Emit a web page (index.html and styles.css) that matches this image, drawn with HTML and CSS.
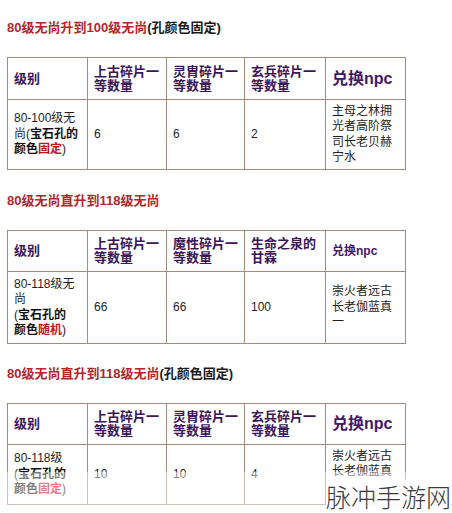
FILE: index.html
```html
<!DOCTYPE html>
<html lang="zh">
<head>
<meta charset="utf-8">
<link rel="stylesheet" href="styles.css">
</head>
<body>
<div class="page">
  <p class="title"><span class="red">80级无尚升到100级无尚</span>(孔颜色固定)</p>
  <table class="grid t1">
    <colgroup><col class="c1"><col class="c2"><col class="c3"><col class="c4"><col class="c5"></colgroup>
    <tr class="head">
      <td>级别</td>
      <td>上古碎片一<br>等数量</td>
      <td>灵胄碎片一<br>等数量</td>
      <td>玄兵碎片一<br>等数量</td>
      <td class="npc big">兑换npc</td>
    </tr>
    <tr class="body">
      <td>80-100级无<br>尚(<b>宝石孔的</b><br><b>颜色<span class="red">固定</span></b>)</td>
      <td>6</td>
      <td>6</td>
      <td>2</td>
      <td>主母之林拥<br>光者高阶祭<br>司长老贝赫<br>宁水</td>
    </tr>
  </table>

  <p class="title"><span class="red">80级无尚直升到118级无尚</span></p>
  <table class="grid t2">
    <colgroup><col class="c1"><col class="c2"><col class="c3"><col class="c4"><col class="c5"></colgroup>
    <tr class="head">
      <td>级别</td>
      <td>上古碎片一<br>等数量</td>
      <td>魔性碎片一<br>等数量</td>
      <td>生命之泉的<br>甘霖</td>
      <td class="npc">兑换npc</td>
    </tr>
    <tr class="body">
      <td>80-118级无<br>尚<br>(<b>宝石孔的</b><br><b>颜色<span class="red">随机</span></b>)</td>
      <td>66</td>
      <td>66</td>
      <td>100</td>
      <td>崇火者远古<br>长老伽蓝真<br>一</td>
    </tr>
  </table>

  <p class="title"><span class="red">80级无尚直升到118级无尚</span>(孔颜色固定)</p>
  <table class="grid t3">
    <colgroup><col class="c1"><col class="c2"><col class="c3"><col class="c4"><col class="c5"></colgroup>
    <tr class="head">
      <td>级别</td>
      <td>上古碎片一<br>等数量</td>
      <td>灵胄碎片一<br>等数量</td>
      <td>玄兵碎片一<br>等数量</td>
      <td class="npc big">兑换npc</td>
    </tr>
    <tr class="body">
      <td>80-118级<br>(<b>宝石孔的</b><br><b>颜色<span class="red">固定</span></b>)</td>
      <td>10</td>
      <td>10</td>
      <td>4</td>
      <td class="top">崇火者远古<br>长老伽蓝真</td>
    </tr>
  </table>
</div>
<div class="fade"></div>
<div class="watermark">脉冲手游网</div>
</body>
</html>
```

FILE: styles.css
```css
html, body {
  margin: 0;
  padding: 0;
  background: #ffffff;
}

body {
  width: 452px;
  height: 513px;
  overflow: hidden;
  position: relative;
  font-family: "Liberation Sans", "Noto Sans CJK SC", sans-serif;
  color: #1e1e1e;
}

.page {
  padding: 20px 0 0 7px;
}

.title {
  margin: 0 0 21px;
  font-size: 13px;
  line-height: 16px;
  font-weight: bold;
  color: #1a1a1a;
}

.red {
  color: #b1272b;
}

.grid {
  border-collapse: collapse;
  table-layout: fixed;
  width: 398px;
  margin-bottom: 23px;
}

.t2 {
  margin-bottom: 22px;
}

.c1 { width: 80px; }
.c2 { width: 79px; }
.c3 { width: 78px; }
.c4 { width: 81px; }
.c5 { width: 80px; }

.grid td {
  border: 1px solid #a5897b;
  padding: 0 5px 0 6px;
  vertical-align: middle;
  font-size: 12px;
  line-height: 15.5px;
  overflow: hidden;
  white-space: nowrap;
}

.grid td.top {
  vertical-align: top;
  padding-top: 4px;
  line-height: 15px;
}

.head td {
  font-size: 13px;
  line-height: 14px;
  font-weight: bold;
  color: #3b1659;
}

.head td.npc {
  font-size: 12px;
  color: #44176b;
}

.head td.npc.big {
  font-size: 16px;
}

.t1 .head td { height: 41px; }
.t1 .body td { height: 69px; }
.t2 .head td { height: 40px; }
.t2 .body td { height: 71px; }
.t3 .head td { height: 40px; }
.t3 .body td { height: 55px; }

.body b {
  font-weight: bold;
  color: #111;
}

.body b .red {
  color: #c0161b;
}

.fade {
  position: absolute;
  left: 0;
  top: 472px;
  width: 452px;
  height: 41px;
  background: rgba(255, 255, 255, 0.45);
}

.watermark {
  position: absolute;
  left: 326px;
  top: 479px;
  width: 126px;
  height: 34px;
  background: rgba(255, 255, 255, 0.92);
  font-family: "Noto Sans CJK SC", sans-serif;
  font-weight: 300;
  font-size: 25px;
  line-height: 34px;
  color: #3a3a3a;
  white-space: nowrap;
}
```
